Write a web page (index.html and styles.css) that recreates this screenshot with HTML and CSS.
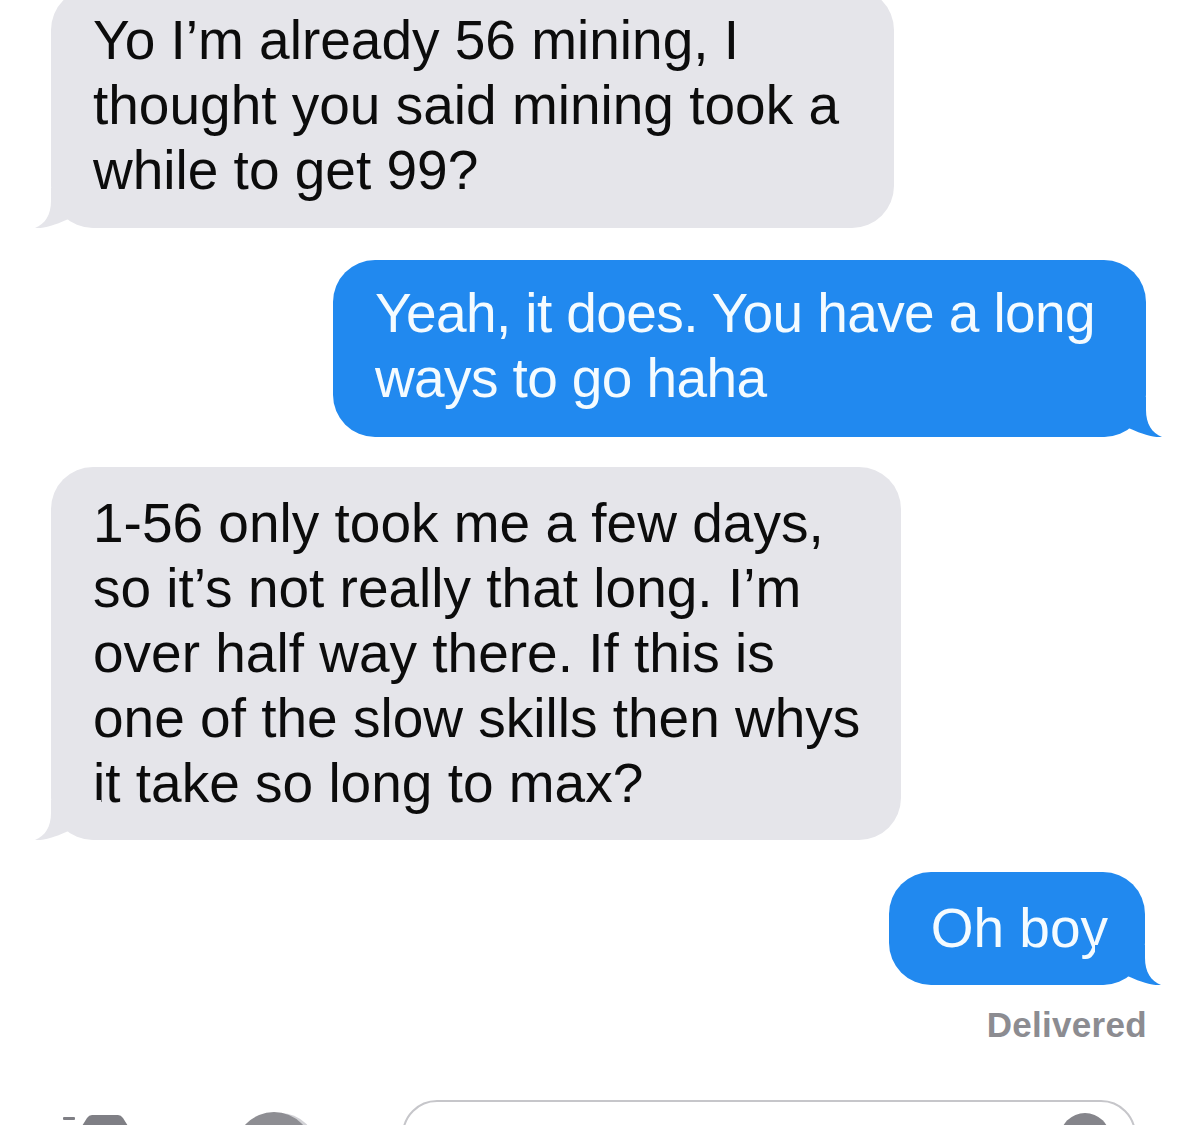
FILE: index.html
```html
<!DOCTYPE html>
<html lang="en">
<head>
<meta charset="utf-8">
<title>Messages</title>
<link rel="stylesheet" href="styles.css">
</head>
<body>
<main class="chat">
  <div class="msg in first">
    <span class="line">Yo I’m already 56 mining, I</span>
    <span class="line">thought you said mining took a</span>
    <span class="line">while to get 99?</span>
    <svg class="tail" viewBox="0 0 66 40" width="66" height="40"><path d="M16,0 L16,13 C16,27 10,36 0,40 C10,41 22,36 36,30 C42,36 52,40 66,40 L66,0 Z"/></svg>
  </div>
  <div class="msg out second">
    <span class="line">Yeah, it does. You have a long</span>
    <span class="line">ways to go haha</span>
    <svg class="tail" viewBox="0 0 66 40" width="66" height="40"><path d="M16,0 L16,13 C16,27 10,36 0,40 C10,41 22,36 36,30 C42,36 52,40 66,40 L66,0 Z"/></svg>
  </div>
  <div class="msg in third">
    <span class="line">1-56 only took me a few days,</span>
    <span class="line">so it’s not really that long. I’m</span>
    <span class="line">over half way there. If this is</span>
    <span class="line">one of the slow skills then whys</span>
    <span class="line">it take so long to max?</span>
    <svg class="tail" viewBox="0 0 66 40" width="66" height="40"><path d="M16,0 L16,13 C16,27 10,36 0,40 C10,41 22,36 36,30 C42,36 52,40 66,40 L66,0 Z"/></svg>
  </div>
  <div class="msg out fourth">
    <span class="line">Oh boy</span>
    <svg class="tail" viewBox="0 0 66 40" width="66" height="40"><path d="M16,0 L16,13 C16,27 10,36 0,40 C10,41 22,36 36,30 C42,36 52,40 66,40 L66,0 Z"/></svg>
  </div>
  <div class="status">Delivered</div>
</main>
<footer class="composer">
  <svg class="camera" viewBox="0 0 70 30" width="70" height="30">
    <rect x="3" y="4" width="12" height="3" rx="1"/>
    <path d="M14,30 L14,16 Q14,13 18,13 L22,13 L27,5 Q29,2 32,2 L58,2 Q61,2 63,5 L68,13 L70,13 L70,30 Z"/>
  </svg>
  <div class="appstore"></div>
  <div class="field">
    <div class="mic"></div>
  </div>
</footer>
</body>
</html>
```
FILE: styles.css
```css
html, body {
  margin: 0;
  padding: 0;
  background: #ffffff;
  overflow: hidden;
}

body {
  width: 1200px;
  height: 1125px;
  font-family: "Liberation Sans", Arial, sans-serif;
}

.chat {
  display: flex;
  flex-direction: column;
  margin-top: -12px;
}

.msg {
  position: relative;
  display: flex;
  flex-direction: column;
  font-size: 55px;
  line-height: 65px;
  border-radius: 42px;
  padding: 20px 48px 25px 43px;
  white-space: nowrap;
}

.line {
  display: block;
}

.msg.in {
  align-self: flex-start;
  margin-left: 51px;
  background: #e5e5ea;
  color: #0c0c0c;
}

.msg.out {
  align-self: flex-end;
  margin-right: 54px;
  background: #2189ef;
  color: #f4fbff;
}

.tail {
  position: absolute;
  bottom: 0;
  display: block;
}

.msg.in .tail {
  left: -16px;
  fill: #e5e5ea;
}

.msg.out .tail {
  right: -16px;
  transform: scaleX(-1);
  fill: #2189ef;
}

.msg.first {
  padding-right: 55px;
  padding-left: 42px;
  padding-bottom: 25px;
}

.msg.second {
  margin-top: 32px;
  padding: 21px 51px 26px 42px;
  letter-spacing: -0.6px;
}

.msg.third {
  margin-top: 30px;
  padding: 24px 41px 24px 42px;
}

.msg.fourth {
  margin-top: 32px;
  margin-right: 55px;
  padding: 24px 37px 24px 42px;
}

.status {
  align-self: flex-end;
  margin-top: 20px;
  margin-right: 53px;
  font-size: 35px;
  line-height: 40px;
  font-weight: 700;
  letter-spacing: 0.3px;
  color: #8c8c91;
}

.composer {
  display: flex;
  align-items: flex-start;
  margin-top: 55px;
  height: 60px;
}

.camera {
  margin-left: 60px;
  margin-top: 13px;
  fill: #7f7f85;
}

.appstore {
  margin-left: 105px;
  margin-top: 12px;
  width: 78px;
  height: 78px;
  border-radius: 50%;
  background: #8e8e93;
  box-shadow: 6px -1px 0 -2px #d2d2d6;
}

.field {
  display: flex;
  justify-content: flex-end;
  margin-left: 89px;
  width: 734px;
  height: 70px;
  border: 2px solid #c6c6ca;
  border-radius: 36px;
  box-sizing: border-box;
  padding: 11px 24px 0 0;
}

.mic {
  width: 50px;
  height: 50px;
  border-radius: 50%;
  background: #85858b;
}
```
